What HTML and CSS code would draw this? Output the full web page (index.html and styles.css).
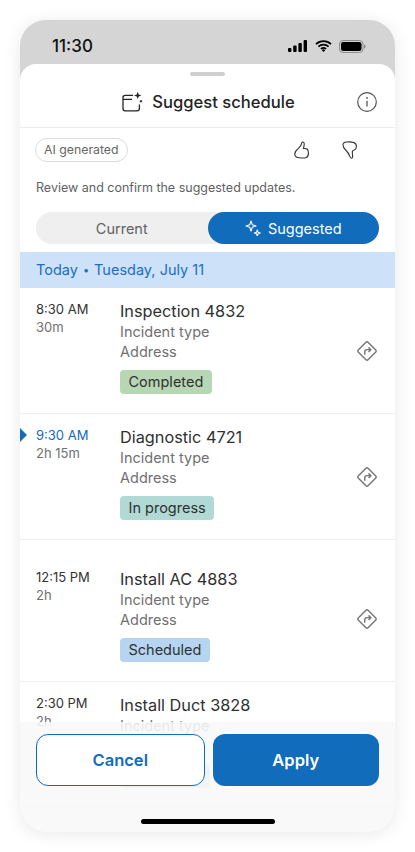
FILE: index.html
```html
<!DOCTYPE html>
<html lang="en">
<head>
    <meta charset="UTF-8">
    <meta name="viewport" content="width=device-width, initial-scale=1.0">
    <title>Suggest schedule</title>
    <link rel="stylesheet" href="styles.css">
</head>
<body>
    <div class="phone">
        <div class="status-bar">
            <span class="clock">11:30</span>
            <div class="status-icons">
                <svg width="20" height="12" viewBox="0 0 20 12"><rect x="0" y="8" width="3.4" height="4" rx="1"/><rect x="5.2" y="5.6" width="3.4" height="6.4" rx="1"/><rect x="10.4" y="3" width="3.4" height="9" rx="1"/><rect x="15.6" y="0" width="3.4" height="12" rx="1"/></svg>
                <svg width="17" height="12" viewBox="0 0 17 12"><path d="M1 4.2a10.8 10.8 0 0 1 15 0M3.4 6.700a7.400 7.400 0 0 1 10.200 0M5.900 9a3.800 3.800 0 0 1 5.200 0" fill="none" stroke="#000" stroke-width="1.7"/><path d="M8.500 12l-1.700-1.800a2.400 2.400 0 0 1 3.400 0z"/></svg>
                <svg width="27" height="13" viewBox="0 0 27 13"><rect x=".5" y=".5" width="23.5" height="12" rx="3.5" fill="none" stroke="#8d8d8d"/><rect x="2" y="2" width="20.5" height="9" rx="2.2"/><path d="M25 4.500c1 .3 1.600 1 1.600 2s-.6 1.700-1.600 2z" fill="#8d8d8d"/></svg>
            </div>
        </div>

        <div class="sheet">
            <div class="handle"></div>
            <div class="sheet-header">
                <svg class="title-icon" width="21" height="21" viewBox="0 0 21 21" fill="none" stroke="#242424" stroke-width="1.3">
                    <path d="M11 4.400H3.200A2.200 2.200 0 0 0 1 6.600v11a2.200 2.200 0 0 0 2.200 2.200h12a2.200 2.200 0 0 0 2.200-2.200v-4M1 8.400h9"/>
                    <path d="M15.700 .8l1 2.600 2.700 1-2.700 1-1 2.600-1-2.600-2.700-1 2.700-1z" fill="#242424" stroke="none"/>
                    <path d="M19 8.900v2.600M17.700 10.200h2.600" stroke-width="1.100"/>
                </svg>
                <h1>Suggest schedule</h1>
                <svg class="info-icon" width="20" height="20" viewBox="0 0 20 20" fill="none" stroke="#555">
                    <circle cx="10" cy="10" r="9.300" stroke-width="1.200"/>
                    <path d="M10 8.800v5.600" stroke-width="1.300"/>
                    <circle cx="10" cy="6" r=".9" fill="#555" stroke="none"/>
                </svg>
            </div>

            <div class="feedback-row">
                <span class="chip">AI generated</span>
                <div class="thumbs">
                    <svg width="16" height="18" viewBox="0 0 16 18" fill="none" stroke="#333" stroke-width="1.100" stroke-linejoin="round">
                        <path d="M8.600 1C7.500 1 7.600 2 7.400 3.200 7.200 4.600 5.800 6.200 4.400 7.400 2.400 9 .8 10.800.8 13c0 2.400 2 3.600 4.600 3.800 2 .2 5.200.4 7-.4 1.800-.8 2.200-2.600 2-4.600-.1-1.400-.4-3-1.200-3.800-.8-.7-2.200-.6-3.800-.5.4-1.500.8-2.800.8-4C10.400 2 9.800 1 8.600 1z"/>
                    </svg>
                    <svg width="15" height="18" viewBox="0 0 15 18" fill="none" stroke="#333" stroke-width="1.100" stroke-linejoin="round">
                        <path d="M1 3.600C1 2 2.600 1.200 4.600 1c2.400-.2 5-.2 6.800.4C13.400 2 14.400 3.600 14.400 5.600c0 1.800-.8 3-2 3.400-1 .3-1.800.5-2 1.400-.2 1.200 0 2.800.2 4.200.2 1.400-.2 2.600-1.200 2.600-.8 0-1.200-.8-1.600-1.800C7 13 5.400 10.600 3.600 9 2 7.600 1 5.600 1 3.600z"/>
                    </svg>
                </div>
            </div>
            <p class="review-note">Review and confirm the suggested updates.</p>

            <div class="segments">
                <div class="segment">Current</div>
                <div class="segment segment-active">
                    <svg width="16" height="16" viewBox="0 0 16 16" fill="none" stroke="#fff" stroke-width="1.100" stroke-linejoin="round">
                        <path d="M6 1l1.300 3.700L11 6 7.300 7.300 6 11 4.700 7.300 1 6l3.700-1.300z"/>
                        <path d="M12.300 10l.8 2.200 2.200.8-2.200.8-.8 2.200-.8-2.200-2.200-.8 2.200-.8z"/>
                    </svg>
                    Suggested
                </div>
            </div>

            <div class="date-band">Today<span class="dot">•</span>Tuesday, July 11</div>

            <div class="job-list">
                <div class="job">
                    <div class="job-time"><div class="start">8:30 AM</div><div class="length">30m</div></div>
                    <div class="job-info">
                        <div class="job-title">Inspection 4832</div>
                        <div class="job-sub">Incident type</div>
                        <div class="job-sub">Address</div>
                        <span class="tag tag-done">Completed</span>
                    </div>
                    <svg class="route-icon" width="20" height="20" viewBox="0 0 22 22" fill="none" stroke="#777"><path d="M9.600 1.600a2 2 0 0 1 2.800 0l8 8a2 2 0 0 1 0 2.800l-8 8a2 2 0 0 1-2.800 0l-8-8a2 2 0 0 1 0-2.800z" stroke-width="1.600"/><path d="M8.500 15v-3a2.500 2.500 0 0 1 2.500-2.500h3.500M12.700 7l2.500 2.500-2.500 2.500" stroke-width="1.600"/></svg>
                </div>
                <div class="job job-current">
                    <div class="job-time"><div class="start">9:30 AM</div><div class="length">2h 15m</div></div>
                    <div class="job-info">
                        <div class="job-title">Diagnostic 4721</div>
                        <div class="job-sub">Incident type</div>
                        <div class="job-sub">Address</div>
                        <span class="tag tag-progress">In progress</span>
                    </div>
                    <svg class="route-icon" width="20" height="20" viewBox="0 0 22 22" fill="none" stroke="#777"><path d="M9.600 1.600a2 2 0 0 1 2.800 0l8 8a2 2 0 0 1 0 2.800l-8 8a2 2 0 0 1-2.800 0l-8-8a2 2 0 0 1 0-2.800z" stroke-width="1.600"/><path d="M8.500 15v-3a2.500 2.500 0 0 1 2.500-2.500h3.500M12.700 7l2.500 2.500-2.500 2.500" stroke-width="1.600"/></svg>
                </div>
                <div class="job job-gap">
                    <div class="job-time"><div class="start">12:15 PM</div><div class="length">2h</div></div>
                    <div class="job-info">
                        <div class="job-title">Install AC 4883</div>
                        <div class="job-sub">Incident type</div>
                        <div class="job-sub">Address</div>
                        <span class="tag tag-scheduled">Scheduled</span>
                    </div>
                    <svg class="route-icon" width="20" height="20" viewBox="0 0 22 22" fill="none" stroke="#777"><path d="M9.600 1.600a2 2 0 0 1 2.800 0l8 8a2 2 0 0 1 0 2.800l-8 8a2 2 0 0 1-2.800 0l-8-8a2 2 0 0 1 0-2.800z" stroke-width="1.600"/><path d="M8.500 15v-3a2.500 2.500 0 0 1 2.500-2.500h3.500M12.700 7l2.500 2.500-2.500 2.500" stroke-width="1.600"/></svg>
                </div>
                <div class="job">
                    <div class="job-time"><div class="start">2:30 PM</div><div class="length">2h</div></div>
                    <div class="job-info">
                        <div class="job-title">Install Duct 3828</div>
                        <div class="job-sub">Incident type</div>
                        <div class="job-sub">Address</div>
                        <span class="tag tag-scheduled">Scheduled</span>
                    </div>
                </div>
            </div>
        </div>

        <div class="footer">
            <div class="actions">
                <button class="btn btn-cancel">Cancel</button>
                <button class="btn btn-apply">Apply</button>
            </div>
            <div class="home-bar"></div>
        </div>
    </div>
</body>
</html>
```

FILE: styles.css
```css
body {
    margin: 0;
    padding: 20px;
    background-color: #fff;
    font-family: Inter, "Liberation Sans", sans-serif;
    color: #242424;
}
.phone {
    position: relative;
    width: 375px;
    height: 812px;
    border-radius: 26px;
    overflow: hidden;
    background-color: #d5d5d5;
    display: flex;
    flex-direction: column;
    box-shadow: 0 2px 18px rgba(0, 0, 0, 0.09);
}
.status-bar {
    height: 44px;
    flex: none;
    display: flex;
    justify-content: space-between;
    align-items: center;
    padding: 8px 29px 0 32px;
    box-sizing: border-box;
}
.clock {
    font-size: 17px;
    font-weight: 500;
    color: #111;
}
.status-icons {
    display: flex;
    align-items: center;
    gap: 7px;
}
.sheet {
    flex: 1;
    background-color: #fff;
    border-radius: 16px 16px 0 0;
    overflow: hidden;
}
.handle {
    width: 35px;
    height: 4px;
    margin: 8px auto 0;
    border-radius: 2px;
    background-color: #cfcfcf;
}
.sheet-header {
    position: relative;
    height: 51px;
    padding-left: 2px;
    display: flex;
    align-items: center;
    justify-content: center;
    gap: 9px;
    border-bottom: 1px solid #ececec;
}
.sheet-header h1 {
    margin: 0;
    font-size: 16.600px;
    font-weight: 500;
}
.info-icon {
    position: absolute;
    right: 18px;
    top: 16px;
}
.feedback-row {
    display: flex;
    justify-content: space-between;
    align-items: center;
    padding: 10px 38px 0 15px;
}
.chip {
    border: 1px solid #dcdcdc;
    border-radius: 12px;
    padding: 0 8px;
    height: 22px;
    line-height: 22px;
    font-size: 12.300px;
    color: #666;
}
.thumbs {
    display: flex;
    gap: 32px;
}
.review-note {
    margin: 18px 16px 0;
    font-size: 12.500px;
    line-height: 16px;
    color: #616161;
}
.segments {
    display: flex;
    margin: 16px 16px 8px;
    height: 32px;
    border-radius: 16px;
    background-color: #efefef;
}
.segment {
    flex: 1;
    display: flex;
    align-items: center;
    justify-content: center;
    gap: 7px;
    font-size: 14.500px;
    color: #616161;
    border-radius: 16px;
}
.segment-active {
    background-color: #116cbc;
    color: #fff;
}
.date-band {
    height: 36px;
    line-height: 36px;
    padding-left: 16px;
    background-color: #cde1f9;
    color: #1a6fbf;
    font-size: 14.500px;
}
.dot {
    margin: 0 5px;
    font-size: 11px;
    vertical-align: 1px;
}
.job {
    position: relative;
    display: flex;
    padding: 12px 0 19px 16px;
    border-bottom: 1px solid #efefef;
}
.job-gap {
    padding-top: 28px;
}
.job-current::before {
    content: "";
    position: absolute;
    left: 0;
    top: 14px;
    border-left: 7px solid #116cbc;
    border-top: 7px solid transparent;
    border-bottom: 7px solid transparent;
}
.job-current .start {
    color: #116cbc;
}
.job-time {
    width: 84px;
    flex: none;
}
.start {
    font-size: 13px;
    line-height: 18px;
    color: #333;
}
.length {
    font-size: 13px;
    line-height: 18px;
    color: #707070;
}
.job-info {
    flex: 1;
}
.job-title {
    font-size: 16.300px;
    line-height: 22px;
    color: #303030;
}
.job-sub {
    font-size: 14.500px;
    line-height: 20px;
    color: #707070;
}
.tag {
    display: inline-block;
    margin-top: 8px;
    padding: 0 8.500px;
    height: 24px;
    line-height: 24px;
    border-radius: 4px;
    font-size: 14.500px;
    color: #303030;
}
.tag-done {
    background-color: #b7d7b4;
}
.tag-progress {
    background-color: #b1d9d5;
}
.tag-scheduled {
    background-color: #b5d5f2;
}
.route-icon {
    position: absolute;
    right: 18px;
    bottom: 52px;
}
.footer {
    position: absolute;
    left: 0;
    right: 0;
    bottom: 0;
    height: 110px;
    box-sizing: border-box;
    padding: 12px 16px 0;
    background-color: rgba(248, 248, 249, 0.88);
}
.actions {
    display: flex;
    gap: 8px;
}
.btn {
    flex: 1 1 0;
    padding: 0;
    height: 52px;
    border-radius: 12px;
    font-family: inherit;
    font-size: 16.500px;
    font-weight: 600;
}
.btn-cancel {
    background-color: #fff;
    border: 1px solid #116cbc;
    color: #116cbc;
}
.btn-apply {
    background-color: #116cbc;
    border: none;
    color: #fff;
}
.home-bar {
    width: 134px;
    height: 5px;
    margin: 33px auto 0;
    border-radius: 3px;
    background-color: #000;
}
```
